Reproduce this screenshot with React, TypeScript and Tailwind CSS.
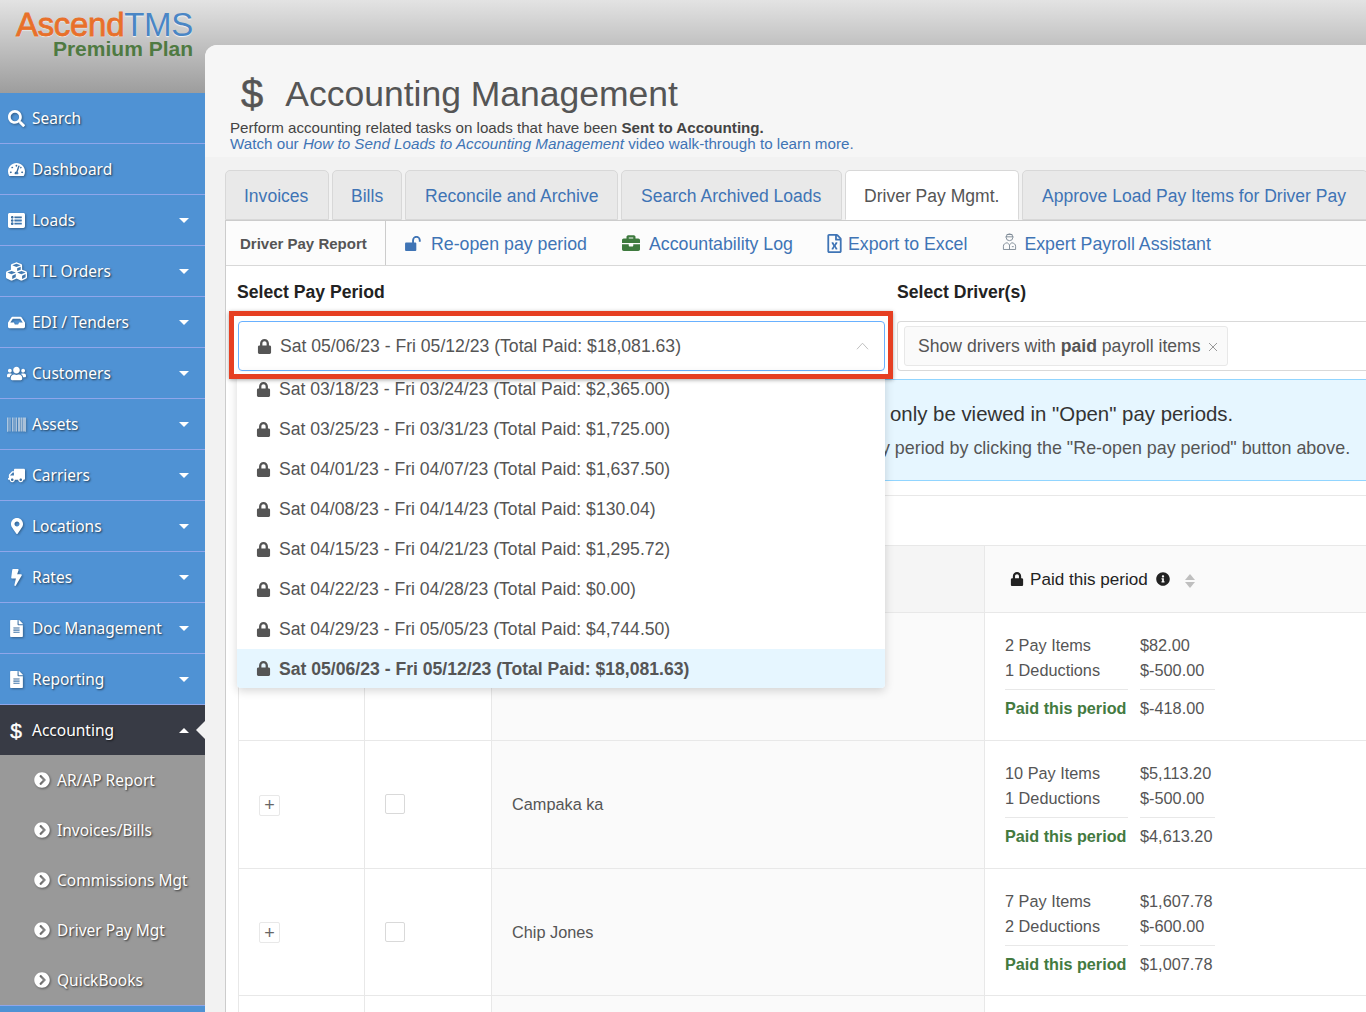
import React from "react";
import { FaSearch, FaTachometerAlt, FaCubes, FaInbox, FaUsers, FaBarcode, FaTruck, FaMapMarkerAlt, FaBolt, FaFileAlt, FaChevronCircleRight, FaBriefcase, FaRegFileExcel, FaLock, FaInfoCircle, FaListAlt } from "react-icons/fa";

type Nav = { label: string; icon: React.ReactNode; caret?: boolean };
const ic = "text-white text-[17px]";
const nav: Nav[] = [
  { label: "Search", icon: <FaSearch className={ic} /> },
  { label: "Dashboard", icon: <FaTachometerAlt className={ic} /> },
  { label: "Loads", icon: <FaListAlt className={ic} />, caret: true },
  { label: "LTL Orders", icon: <FaCubes className="text-white text-[21px]" />, caret: true },
  { label: "EDI / Tenders", icon: <FaInbox className={ic} />, caret: true },
  { label: "Customers", icon: <FaUsers className="text-white text-[19px]" />, caret: true },
  { label: "Assets", icon: <FaBarcode className="text-[#dfe6ee] text-[19px]" />, caret: true },
  { label: "Carriers", icon: <FaTruck className="text-white text-[17px] -scale-x-100" />, caret: true },
  { label: "Locations", icon: <FaMapMarkerAlt className="text-white text-[16px]" />, caret: true },
  { label: "Rates", icon: <FaBolt className={ic} />, caret: true },
  { label: "Doc Management", icon: <FaFileAlt className={ic} />, caret: true },
  { label: "Reporting", icon: <FaFileAlt className={ic} />, caret: true },
];
const subs = ["AR/AP Report", "Invoices/Bills", "Commissions Mgt", "Driver Pay Mgt", "QuickBooks"];
const tabs = [
  { label: "Invoices", w: "w-[104px] pl-[18px]" },
  { label: "Bills", w: "w-[70px] pl-[18px]" },
  { label: "Reconcile and Archive", w: "w-[213px] pl-[19px]" },
  { label: "Search Archived Loads", w: "w-[221px] pl-[19px]" },
  { label: "Driver Pay Mgmt.", w: "w-[174px] pl-[18px]", active: true },
  { label: "Approve Load Pay Items for Driver Pay", w: "w-[346px] pl-[19px]" },
];
const periods = [
  "Sat 03/18/23 - Fri 03/24/23 (Total Paid: $2,365.00)",
  "Sat 03/25/23 - Fri 03/31/23 (Total Paid: $1,725.00)",
  "Sat 04/01/23 - Fri 04/07/23 (Total Paid: $1,637.50)",
  "Sat 04/08/23 - Fri 04/14/23 (Total Paid: $130.04)",
  "Sat 04/15/23 - Fri 04/21/23 (Total Paid: $1,295.72)",
  "Sat 04/22/23 - Fri 04/28/23 (Total Paid: $0.00)",
  "Sat 04/29/23 - Fri 05/05/23 (Total Paid: $4,744.50)",
];
const rows = [
  { name: "", h: "h-[128px]", n: "", a: "2 Pay Items", av: "$82.00", b: "1 Deductions", bv: "$-500.00", t: "$-418.00" },
  { name: "Campaka ka", h: "h-[128px]", n: "", a: "10 Pay Items", av: "$5,113.20", b: "1 Deductions", bv: "$-500.00", t: "$4,613.20" },
  { name: "Chip Jones", h: "h-[127px]", n: "", a: "7 Pay Items", av: "$1,607.78", b: "2 Deductions", bv: "$-600.00", t: "$1,007.78" },
];

function Caret({ up }: { up?: boolean }) {
  return <span className={`ml-auto mr-[16px] w-0 h-0 border-x-[5.5px] border-x-transparent ${up ? "border-b-[5px] border-b-white" : "border-t-[5px] border-t-white"}`} />;
}

function Advisor() {
  return (
    <svg viewBox="0 0 16 20" className="w-[15px] h-[19px] mb-[3px]" fill="none" stroke="#7f8b96" strokeWidth="1">
      <circle cx="8" cy="5.5" r="3.6" />
      <path d="M3.8 5h8.4M5 2.5h6" />
      <path d="M1.5 18.5v-3.5c0-2 1.500-3.200 4-3.700l2.500 2.200 2.500-2.200c2.500.5 4 1.700 4 3.700v3.500z" />
      <path d="M8 13.500v5M10.500 15.500h2" />
    </svg>
  );
}

function OpenLock() {
  return (
    <svg viewBox="0 0 18 16" className="w-[17px] h-[15px] ml-[19px] mr-[9px]">
      <rect x="0" y="7" width="12" height="9" rx="1" fill="#3f74b5" />
      <path d="M8.500 7.500V4.500a3.600 3.600 0 0 1 7.200 0V6" fill="none" stroke="#3f74b5" strokeWidth="2" />
    </svg>
  );
}

const lockCls = "text-[15px] mr-[8px] shrink-0";

export default function App() {
  return (
    <div className="relative flex w-[1366px] h-[1012px] overflow-hidden bg-[linear-gradient(#e3e3e3,#9d9d9d_93px)] font-['Liberation_Sans',Arial,sans-serif]">
      <aside className="w-[205px] shrink-0 flex flex-col">
        <div className="h-[93px] pt-[10px] pr-[12px] flex flex-col items-end">
          <div className="text-[33px] leading-[30px] tracking-[-0.3px] flex [text-shadow:0_1px_1px_rgba(255,255,255,.8)]">
            <div className="text-[#e8702a] [-webkit-text-stroke:0.8px_#e8702a]">Ascend</div><div className="text-[#4a86c5]">TMS</div>
          </div>
          <div className="text-[21px] leading-[18px] font-bold text-[#4f7a42]">Premium Plan</div>
        </div>
        <nav className="flex-1 bg-[#4f92d4] font-['Noto_Sans',sans-serif] text-white text-[15.500px]">
          {nav.map((n) => (
            <div key={n.label} className="h-[51px] flex items-center border-b border-[#8fa6ea]">
              <span className="w-[32px] pl-[1px] flex justify-center shrink-0 [filter:drop-shadow(1px_1px_1px_rgba(0,0,0,.35))]">{n.icon}</span>
              <span className="pt-[2px] [text-shadow:1px_1px_2px_rgba(0,0,0,.65)]">{n.label}</span>
              {n.caret && <Caret />}
            </div>
          ))}
          <div className="relative h-[50px] flex items-center bg-[#383b45]">
            <span className="w-[32px] flex justify-center shrink-0 text-[21px] leading-none font-['Liberation_Sans',sans-serif] [-webkit-text-stroke:0.4px_white]">$</span>
            <span className="pt-[2px] [text-shadow:1px_1px_2px_rgba(0,0,0,.65)]">Accounting</span>
            <Caret up />
            <span className="absolute right-0 top-[16px] w-0 h-0 border-y-[9px] border-y-transparent border-r-[9px] border-r-[#f2f2f2]" />
          </div>
          <div className="bg-[#999999] border-b border-[#8fa6ea]">
            {subs.map((s) => (
              <div key={s} className="h-[50px] flex items-center pl-[34px]">
                <FaChevronCircleRight className="text-white text-[16px] mr-[7px] [filter:drop-shadow(1px_1px_1px_rgba(0,0,0,.4))]" />
                <span className="pt-[2px] [text-shadow:1px_1px_2px_rgba(0,0,0,.7)]">{s}</span>
              </div>
            ))}
          </div>
        </nav>
      </aside>

      <div className="flex-1 min-w-0 pt-[45px] flex flex-col">
        <main className="flex-1 rounded-tl-[12px] bg-[#f2f2f2] overflow-hidden flex flex-col">
          <header className="h-[112px] shrink-0 bg-[#f6f6f6] pl-[25px] pt-[27px]">
            <div className="flex items-center h-[44px] text-[#555555]">
              <span className="text-[40px] leading-[44px] ml-[11px] mr-[22px] [-webkit-text-stroke:0.5px_#555555]">$</span>
              <h1 className="text-[35.500px] leading-[44px]">Accounting Management</h1>
            </div>
            <p className="mt-[4px] text-[15.150px] leading-[16px] text-[#444444]">Perform accounting related tasks on loads that have been <b>Sent to Accounting.</b></p>
            <p className="text-[15.200px] leading-[16px] text-[#3f74b5]">Watch our <i>How to Send Loads to Accounting Management</i> video walk-through to learn more.</p>
          </header>

          <div className="flex-1 pl-[20px] pt-[13px] flex flex-col min-h-0">
            <div className="flex gap-[3px] h-[50px] shrink-0">
              {tabs.map((t) => (
                <div key={t.label} className={`${t.w} shrink-0 pt-[2px] whitespace-nowrap flex items-center text-[17.550px] rounded-t-[5px] border border-[#d8d8d8] ${t.active ? "bg-white text-[#555555] border-b-white" : "bg-[#e9e9e9] text-[#3f74b5]"}`}>{t.label}</div>
              ))}
            </div>

            <div className="relative flex-1 bg-white border-l border-t border-[#cccccc] min-h-0">
              <div className="h-[45px] flex items-center bg-[#fcfcfc] border-b border-[#d8d8d8] text-[17.750px] text-[#3f74b5] whitespace-nowrap">
                <div className="w-[160px] h-full flex items-center pl-[14px] pt-[2px] border-r border-[#cccccc] text-[15px] font-bold text-[#555555]">Driver Pay Report</div>
                <OpenLock />
                <span className="pt-[2px]">Re-open pay period</span>
                <FaBriefcase className="ml-[35px] mr-[9px] text-[18px] text-[#3e7a3e]" />
                <span className="pt-[2px]">Accountability Log</span>
                <FaRegFileExcel className="ml-[32px] mr-[4px] text-[19px] text-[#3f74b5]" />
                <span className="pt-[2px]">Export to Excel</span>
                <span className="ml-[35px] mr-[7px]"><Advisor /></span>
                <span className="pt-[2px]">Expert Payroll Assistant</span>
              </div>

              <div className="flex h-[55px] items-center pl-[11px] pb-[2px] text-[17.600px] font-bold text-[#222222]">
                <span className="w-[660px]">Select Pay Period</span>
                <span>Select Driver(s)</span>
              </div>

              <div className="flex h-[50px] pl-[12px] gap-[12px]">
                <div className="w-[647px] shrink-0 flex items-center pl-[18px] pr-[15px] rounded-[4px] border border-[#69b1ff] bg-white text-[17.600px] text-[#555555]">
                  <FaLock className={lockCls} />
                  <span>Sat 05/06/23 - Fri 05/12/23 (Total Paid: $18,081.63)</span>
                  <svg viewBox="0 0 14 8" className="ml-auto w-[13px] h-[8px]" fill="none" stroke="#bbbbbb" strokeWidth="1"><path d="M1 7.500 7 1l6 6.500" /></svg>
                </div>
                <div className="flex-1 flex items-center pl-[6px] rounded-l-[4px] border border-r-0 border-[#d9d9d9]">
                  <div className="h-[40px] w-[324px] flex items-center pl-[13px] rounded-[3px] border border-[#e8e8e8] bg-[#fafafa] text-[17.600px] text-[#555555] whitespace-nowrap">
                    <span>Show drivers with <b>paid</b> payroll items</span>
                    <svg viewBox="0 0 10 10" className="ml-[7px] mt-[2px] w-[10px] h-[10px]" stroke="#999999" strokeWidth="1"><path d="M1 1l8 8M9 1l-8 8" /></svg>
                  </div>
                </div>
              </div>

              <div className="mt-[8px] ml-[12px] h-[102px] bg-[#e6f6ff] border-y border-[#91d5ff] text-[#333333] whitespace-nowrap">
                <p className="pl-[652px] pt-[20px] text-[20.400px] leading-[28px]">only be viewed in "Open" pay periods.</p>
                <p className="pl-[623px] mt-[7px] text-[17.900px] leading-[26px] text-[#555555]">pay period by clicking the "Re-open pay period" button above.</p>
              </div>

              <div className="mt-[14px] ml-[12px] h-[50px] border-t border-[#e8e8e8]" />

              <div className="ml-[12px] grid grid-cols-[126px_127px_493px_1fr] border-t border-l border-[#e8e8e8] text-[16.300px] text-[#555555]">
                <div className="h-[67px] bg-[#f5f5f5] border-r border-b border-[#e8e8e8]" />
                <div className="h-[67px] bg-[#f5f5f5] border-r border-b border-[#e8e8e8]" />
                <div className="h-[67px] bg-[#f5f5f5] border-r border-b border-[#e8e8e8]" />
                <div className="h-[67px] bg-[#fafafa] border-b border-[#e8e8e8] pl-[25px] flex items-center text-[#222222] text-[17.100px]">
                  <FaLock className="text-[14px] mr-[6px]" />
                  <span className="pt-[2px]">Paid this period</span>
                  <FaInfoCircle className="ml-[8px] text-[14px]" />
                  <span className="ml-[15px] flex flex-col gap-[2px] mt-[3px]">
                    <span className="w-0 h-0 border-x-[5px] border-x-transparent border-b-[6px] border-b-[#bfbfbf]" />
                    <span className="w-0 h-0 border-x-[5px] border-x-transparent border-t-[6px] border-t-[#bfbfbf]" />
                  </span>
                </div>
                {rows.map((r) => (
                  <React.Fragment key={r.t}>
                    <div className={`${r.h} border-r border-b border-[#e8e8e8] flex items-center pl-[20px]`}>
                      <span className="w-[21px] h-[21px] mt-[1px] flex items-center justify-center rounded-[2px] border border-[#e8e8e8] bg-white text-[18px] leading-none font-light text-[#666666]">+</span>
                    </div>
                    <div className={`${r.h} border-r border-b border-[#e8e8e8] flex items-center pl-[20px]`}>
                      <span className="w-[20px] h-[20px] mb-[1px] rounded-[2px] border border-[#d9d9d9] bg-white" />
                    </div>
                    <div className={`${r.h} bg-[#fafafa] border-r border-b border-[#e8e8e8] flex items-center pl-[20px]`}>{r.name}</div>
                    <div className={`${r.h} border-b border-[#e8e8e8] pl-[20px] pt-[20px]`}>
                      <div className="grid grid-cols-[123px_75px] gap-x-[12px] w-fit leading-[25px] whitespace-nowrap">
                        <span>{r.a}</span><span>{r.av}</span>
                        <span>{r.b}</span><span>{r.bv}</span>
                        <span className="mt-[6px] pt-[6px] border-t border-[#e8e8e8] font-bold text-[16.200px] text-[#437a3f]">Paid this period</span>
                        <span className="mt-[6px] pt-[6px] border-t border-[#e8e8e8]">{r.t}</span>
                      </div>
                    </div>
                  </React.Fragment>
                ))}
                <div className="h-[40px] border-r border-[#e8e8e8]" />
                <div className="h-[40px] border-r border-[#e8e8e8]" />
                <div className="h-[40px] bg-[#fafafa] border-r border-[#e8e8e8]" />
                <div className="h-[40px]" />
              </div>

              <div className="absolute left-[11px] top-[151px] w-[648px] h-[316px] overflow-hidden bg-white rounded-b-[4px] shadow-[0_3px_10px_rgba(0,0,0,.16)] text-[17.600px] text-[#555555]">
                {periods.map((p, i) => (
                  <div key={p} className={`h-[40px] flex items-center pl-[19px] ${i === 0 ? "-mt-[3px]" : ""}`}>
                    <FaLock className={lockCls} />
                    <span>{p}</span>
                  </div>
                ))}
                <div className="h-[39px] flex items-center pl-[19px] bg-[#e6f6ff] font-bold">
                  <FaLock className={lockCls} />
                  <span className="pt-[2px]">Sat 05/06/23 - Fri 05/12/23 (Total Paid: $18,081.63)</span>
                </div>
              </div>

              <div className="absolute left-[3px] top-[90px] w-[664px] h-[68px] border-[5px] border-[#e63f22] shadow-[0_1px_4px_rgba(0,0,0,.35)] pointer-events-none" />
            </div>
          </div>
        </main>
      </div>
    </div>
  );
}
